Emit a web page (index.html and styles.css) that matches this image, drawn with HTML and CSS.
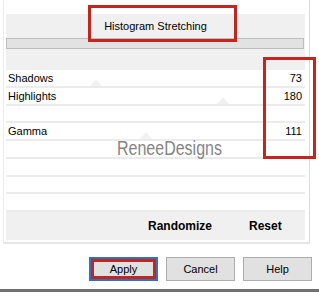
FILE: index.html
```html
<!DOCTYPE html>
<html lang="en">
<head>
    <meta charset="UTF-8">
    <meta name="viewport" content="width=device-width, initial-scale=1.0">
    <title>Histogram Stretching</title>
    <link rel="stylesheet" href="styles.css">
</head>
<body>
    <div class="window">
        <div class="frame">
            <div class="panel">
                <div class="title">Histogram Stretching</div>
                <div class="bar"></div>
                <div class="rows">
                    <div class="row"><span>Shadows</span><span>73</span><i class="thumb thumb-shadows"></i></div>
                    <div class="row"><span>Highlights</span><span>180</span><i class="thumb thumb-highlights"></i></div>
                    <div class="row"></div>
                    <div class="row"><span>Gamma</span><span>111</span><i class="thumb thumb-gamma"></i></div>
                    <div class="row"></div>
                    <div class="row"></div>
                    <div class="row"></div>
                    <div class="row"></div>
                </div>
                <div class="actions">
                    <span>Randomize</span>
                    <span>Reset</span>
                </div>
            </div>
        </div>
        <div class="footer">
            <button class="btn btn-primary">Apply</button>
            <button class="btn">Cancel</button>
            <button class="btn">Help</button>
        </div>

        <!-- annotation boxes and watermark sit over the dialog -->
        <div class="mark mark-title"></div>
        <div class="mark mark-values"></div>
        <div class="watermark">ReneeDesigns</div>
    </div>
</body>
</html>
```

FILE: styles.css
```css
body, html {
    margin: 0;
    padding: 0;
    background: #fff;
    font-family: "Liberation Sans", Arial, sans-serif;
    font-size: 11px;
    color: #000;
}

.window {
    position: relative;
    width: 319px;
    height: 292px;
    overflow: hidden;
    background: #fff;
}

.frame {
    margin-left: 3px;
    width: 307px;
    box-sizing: border-box;
    padding: 14px 4px 2px 2px;
    border-left: 1px solid #ececec;
    border-right: 1px solid #dcdcdc;
    border-bottom: 2px solid #e6e6e6;
}

.panel {
    width: 299px;
    background: #f0f0f0;
}

.title {
    height: 24px;
    line-height: 24px;
    text-align: center;
}

.bar {
    width: 298px;
    height: 11px;
    box-sizing: border-box;
    background: #e2e2e2;
    border: 1px solid #bdbdbd;
    margin-bottom: 21px;
}

.rows {
    background: #fff;
}

.row {
    position: relative;
    height: 17.75px;
    box-sizing: border-box;
    border-bottom: 2px solid #ebebeb;
    display: flex;
    justify-content: space-between;
    align-items: center;
    padding: 0 3px 0 2px;
}

.thumb {
    position: absolute;
    bottom: 0;
    width: 0;
    height: 0;
    border-left: 6px solid transparent;
    border-right: 6px solid transparent;
    border-bottom: 7px solid #f1f1f1;
}

.thumb-shadows { left: 84px; }
.thumb-highlights { left: 211px; }
.thumb-gamma { left: 134px; }

.actions {
    height: 28px;
    display: flex;
    align-items: center;
    font-size: 12px;
    font-weight: bold;
    padding-left: 142px;
    gap: 37px;
}

.footer {
    height: 48px;
    box-sizing: border-box;
    padding: 13px 7px 8px 0;
    border-bottom: 3px solid #707070;
    display: flex;
    justify-content: flex-end;
    gap: 8px;
}

.btn {
    width: 69px;
    height: 24px;
    background: #e1e1e1;
    border: 1px solid #adadad;
    font-family: "Liberation Sans", Arial, sans-serif;
    font-size: 11px;
    color: #000;
    padding: 0;
}

.btn-primary {
    border: 2px solid #2f72c0;
    box-shadow: inset 0 0 0 3px #c3261e;
}

.mark {
    position: absolute;
    box-sizing: border-box;
    border: 3px solid #c3261e;
}

.mark-title {
    left: 88px;
    top: 5px;
    width: 149px;
    height: 37px;
}

.mark-values {
    left: 263px;
    top: 57px;
    width: 53px;
    height: 102px;
}

.watermark {
    position: absolute;
    left: 117px;
    top: 137px;
    font-size: 20px;
    color: #858585;
    transform: scaleX(0.8);
    transform-origin: left top;
    text-shadow: 0 0 2px #fff, 0 0 2px #fff;
}
```
